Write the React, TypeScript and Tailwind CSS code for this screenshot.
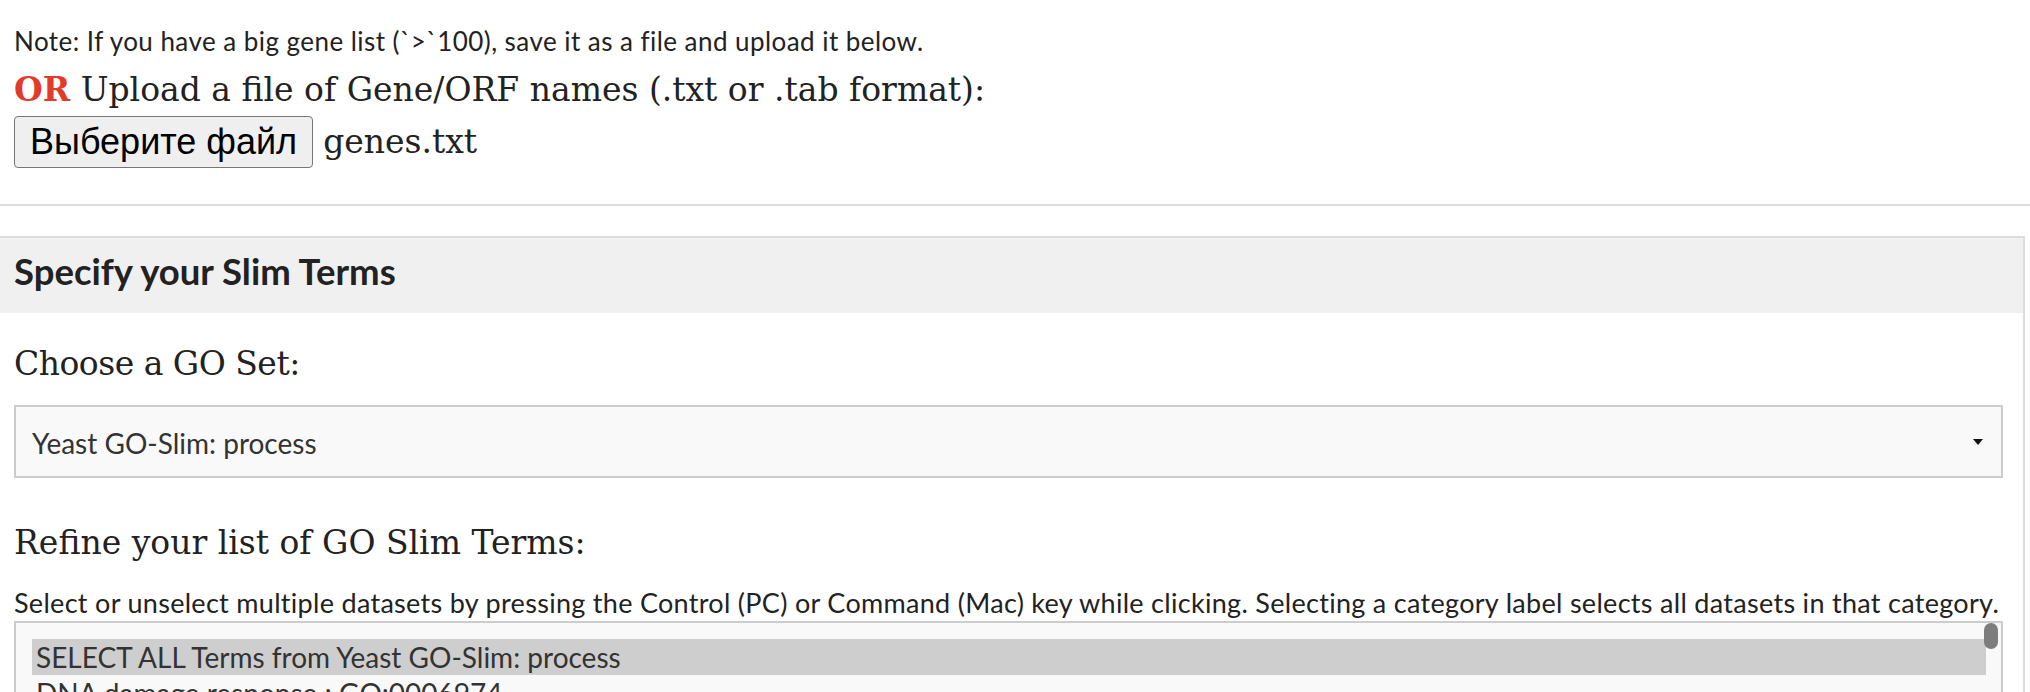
const sans = "font-['Lato','Noto_Sans',sans-serif]";
const serif = "font-['DejaVu_Serif','Liberation_Serif',serif]";

function SelectArrow() {
  return (
    <svg width="10" height="6" viewBox="0 0 10 6" className="shrink-0">
      <path d="M0 0h10L5 6z" fill="#111" />
    </svg>
  );
}

function MultiSelect() {
  const rows = [
    "SELECT ALL Terms from Yeast GO-Slim: process",
    "DNA damage response ; GO:0006974",
    "DNA recombination ; GO:0006310",
    "DNA repair ; GO:0006281",
  ];
  return (
    <div className="mt-[3px] flex h-[180px] overflow-hidden border-2 border-[#ccc] bg-[#f9f9f9]">
      <div className="flex-1 pl-[16px] pt-[16px]">
        {rows.map((r, i) => (
          <div
            key={r}
            className={`h-[36px] text-[28px] leading-[36px] text-[#333] ${
              i === 0 ? "bg-[#cecece]" : ""
            }`}
          >
            <span className="pl-[4px]">{r}</span>
          </div>
        ))}
      </div>
      <div className="w-[15px] shrink-0">
        <div className="ml-[-2px] h-[26px] w-[14px] rounded-full bg-[#7d7d7d]" />
      </div>
    </div>
  );
}

export default function App() {
  return (
    <div className={`min-h-screen bg-white text-[#333] ${sans}`}>
      <div className="pl-[14px] pt-[26px]">
        <p className="text-[26px] leading-[30px] tracking-[0.45px] text-[#222]">
          Note: If you have a big gene list (`&gt;`100), save it as a file and
          upload it below.
        </p>
        <h4
          className={`mt-[14px] text-[33px] leading-[40px] text-[#222] ${serif}`}
        >
          <span className="font-bold text-[#e33b2b]">OR</span> Upload a file of
          Gene/ORF names (.txt or .tab format):
        </h4>
        <div className="mt-[6px] flex items-center">
          <button
            type="button"
            className="h-[52px] rounded-[4px] border border-[#767676] bg-[#efefef] px-[15px] font-['Liberation_Sans',Arial,sans-serif] text-[36px] leading-none text-black"
          >
            Выберите файл
          </button>
          <span className={`ml-[10px] text-[33px] text-[#222] ${serif}`}>
            genes.txt
          </span>
        </div>
      </div>

      <div className="mt-[36px] h-[2px] w-full bg-[#ddd]" />

      <div className="mr-[5px] mt-[30px] border-r-2 border-t-2 border-[#ddd]">
        <div className="h-[75px] bg-[#f0f0f0] pl-[14px] pt-[12px]">
          <h3 className="text-[36.5px] font-bold leading-[42px] text-[#222]">
            Specify your Slim Terms
          </h3>
        </div>
        <div className="pl-[14px] pr-[20px]">
          <h4
            className={`mt-[31px] text-[33px] leading-[40px] tracking-[-0.5px] text-[#222] ${serif}`}
          >
            Choose a GO Set:
          </h4>
          <div className="mt-[21px] flex h-[73px] items-center justify-between border-2 border-[#ccc] bg-[#f9f9f9] pl-[16px] pr-[18px]">
            <span className="pt-[3px] text-[28px] text-[#333]">
              Yeast GO-Slim: process
            </span>
            <SelectArrow />
          </div>
          <h4
            className={`mt-[45px] text-[33px] leading-[40px] text-[#222] ${serif}`}
          >
            Refine your list of GO Slim Terms:
          </h4>
          <p className="mt-[25px] whitespace-nowrap text-[27px] leading-[30px] tracking-[0.3px] text-[#222]">
            Select or unselect multiple datasets by pressing the Control (PC) or
            Command (Mac) key while clicking. Selecting a category label selects
            all datasets in that category.
          </p>
          <MultiSelect />
        </div>
      </div>
    </div>
  );
}
